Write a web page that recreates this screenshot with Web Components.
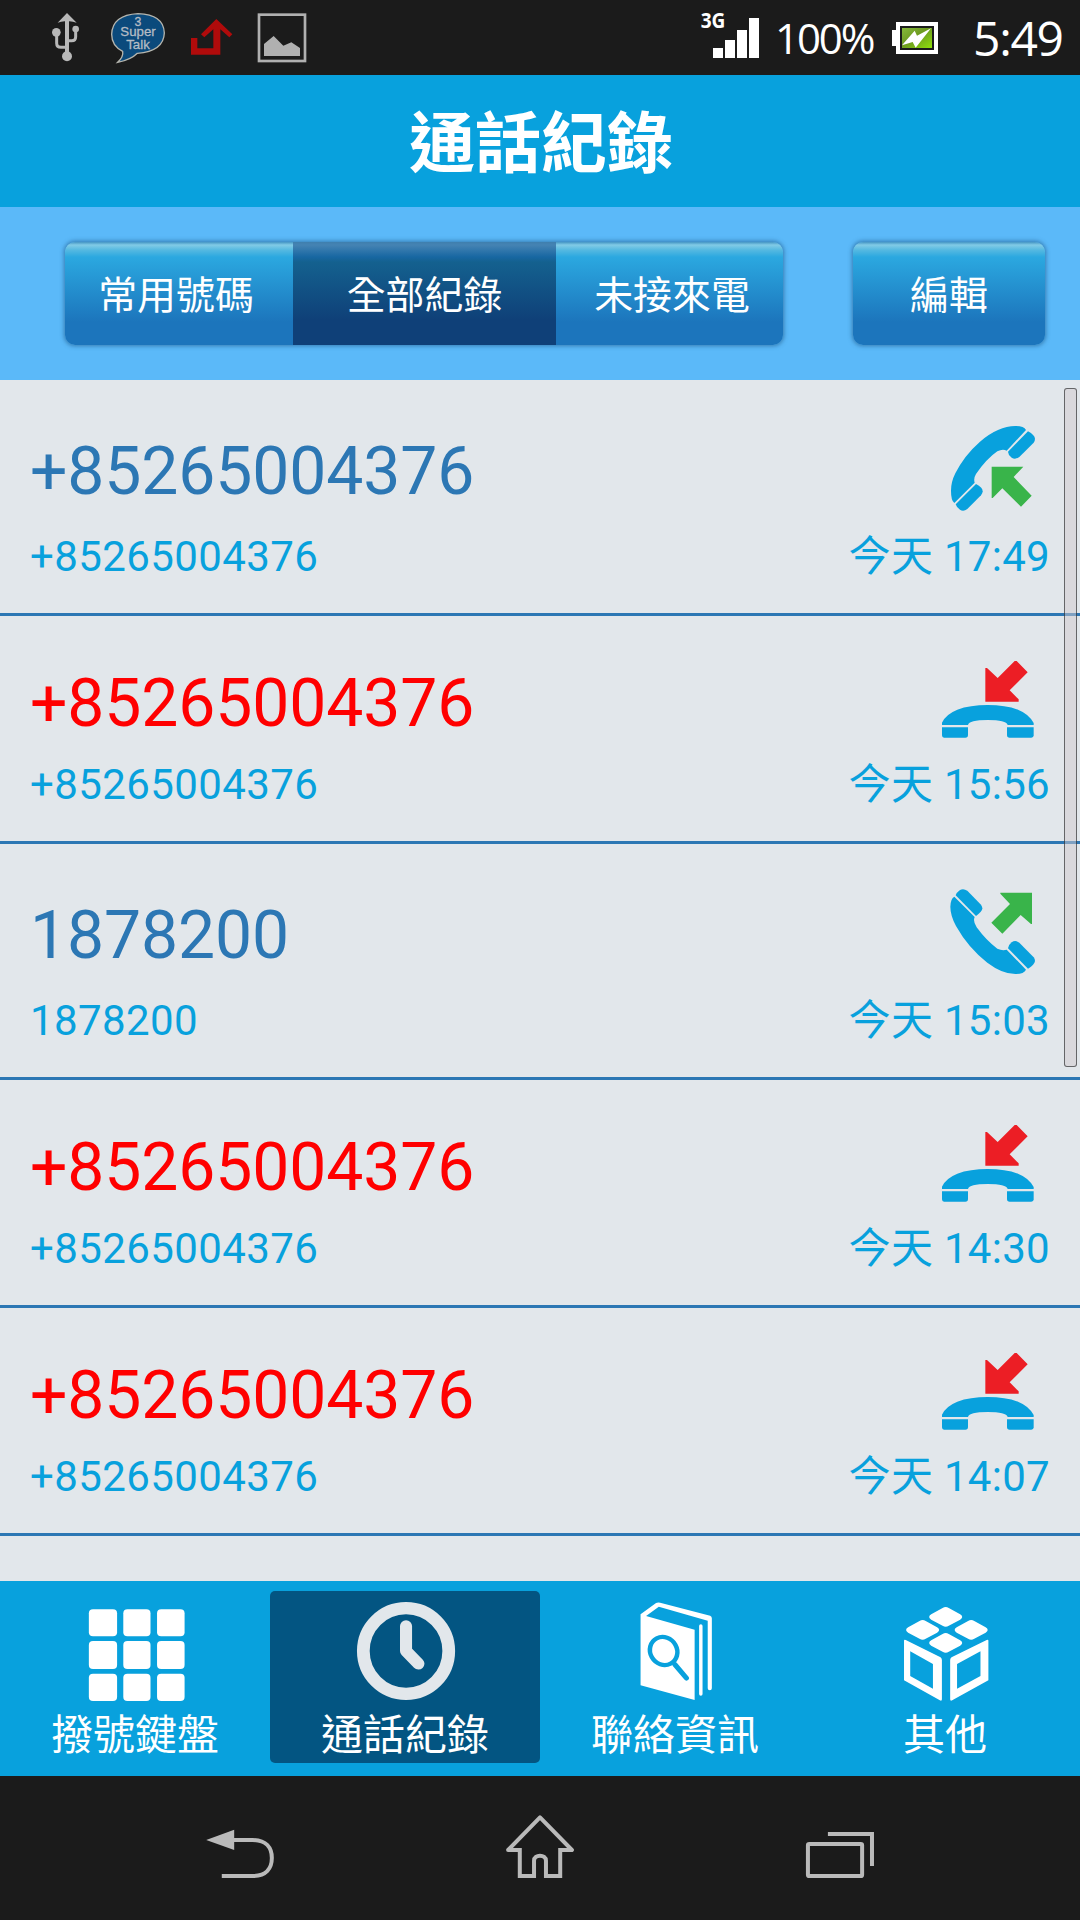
<!DOCTYPE html>
<html lang="zh-Hant">
<head>
<meta charset="utf-8">
<title>通話紀錄</title>
<style>
  body {
    margin: 0;
    width: 1080px;
    height: 1920px;
    overflow: hidden;
    background: #1b1b1b;
    font-family: Roboto, "Noto Sans CJK TC", sans-serif;
  }
</style>
</head>
<body>
<call-app></call-app>

<script>
const CALLS = [
  { kind: "incoming", number: "+85265004376", time: "今天 17:49" },
  { kind: "missed", number: "+85265004376", time: "今天 15:56" },
  { kind: "outgoing", number: "1878200", time: "今天 15:03" },
  { kind: "missed", number: "+85265004376", time: "今天 14:30" },
  { kind: "missed", number: "+85265004376", time: "今天 14:07" }
];

const HANDSET = {
  incoming: /* html */`
    <svg viewBox="480 150 300 300">
      <g fill="#08a1dd">
        <path d="M738 180 Q732 168 706 168 Q655 168 600 215 Q553 256 526 310 Q513 336 513 362 Q513 392 523 399 L584 338 Q580 325 588 312 Q620 266 652 244 Q668 236 680 242Z"/>
        <path d="M744 184 Q764 195 765 206 Q765 212 761 218 L718 261 Q706 270 695 263 Q684 254 684 245Z"/>
        <path d="M588 342 Q608 352 608 364 Q608 371 603 376 L562 417 Q550 426 540 419 Q529 411 527 403Z"/>
      </g>
      <path fill="#39b44a" d="M635 290H730L701 321L755 377L723 410L667 355L638 384H635Z"/>
    </svg>`,
  outgoing: /* html */`
    <svg viewBox="480 72 300 300">
      <g fill="#08a1dd">
        <path d="M738 329 Q732 342 706 342 Q667 342 622 308 Q565 264 528 198 Q511 166 511 140 Q512 115 523 110 L584 171 Q578 184 590 202 Q620 243 652 266 Q667 273 680 269Z"/>
        <path d="M744 326 Q764 314 765 303 Q765 297 761 292 L718 248 Q706 239 695 247 Q684 256 684 265Z"/>
        <path d="M588 168 Q607 155 607 145 Q607 140 603 134 L562 92 Q550 84 540 90 Q529 98 527 106Z"/>
      </g>
      <path fill="#39b44a" d="M661 98H756V192H753L722 165L667 221L634 188L690 132L661 101Z"/>
    </svg>`,
  missed: /* html */`
    <svg viewBox="480 78 300 300">
      <g fill="#08a1dd">
        <path d="M486 285V278Q497 253 532 239Q570 225 623 225Q676 225 714 239Q747 252 761 279V285H683Q679 270 623 270Q567 270 564 285Z"/>
        <path d="M486 292H564V315Q564 323 556 323H492Q486 323 486 316Z"/>
        <path d="M681 292H761V316Q761 323 754 323H689Q681 323 681 315Z"/>
      </g>
      <path fill="#ec1e25" d="M616 215V114H621L653 144L704 93H710L743 127L689 181L716 208V215Z"/>
    </svg>`
};

// Every tab icon is drawn on the same 784x330 grid
const TAB_ICONS = {
  keypad: /* html */`
    <g fill="#fff">
      ${[[118, 81], [213, 84], [311, 82]].map(([y, h]) =>
        [[258, 82], [358, 79], [456, 80]].map(([x, w]) =>
          `<rect x="${x}" y="${y}" width="${w}" height="${h}" rx="12"/>`).join("")).join("")}
    </g>`,
  clock: /* html */`
    <g fill="none" stroke="#e2e7eb">
      <ellipse cx="395" cy="243" rx="124" ry="128.500" stroke-width="37"/>
      <path d="M395 168V243L431 281" stroke-width="35" stroke-linecap="round" stroke-linejoin="round"/>
    </g>`,
  book: /* html */`
    <path fill="#fff" fill-rule="evenodd" d="M292 133L337 99Q342 96 349 98L494 137Q499 139 499 145V355Q499 361 493 361Q487 361 487 355V152L345 110L308 138L449 179V390L292 346Z"/>
    <path stroke="#fff" stroke-width="10" stroke-linecap="round" d="M467 168V372"/>
    <ellipse cx="359" cy="243" rx="39" ry="43" transform="rotate(-28 359 243)" fill="none" stroke="#08a1dd" stroke-width="13"/>
    <path d="M392 284L425 324" stroke="#08a1dd" stroke-width="15" stroke-linecap="round"/>`,
  cube: /* html */`
    <g fill="#fff">
      <path id="t" d="M385 114Q394 108 403 114L436 133Q448 141 436 149L403 167Q394 173 385 167L352 149Q340 141 352 133Z"/>
      <use href="#t" x="-67" y="39"/>
      <use href="#t" x="74" y="39"/>
      <use href="#t" y="78"/>
      <path fill-rule="evenodd" d="M273 212Q273 208 278 210L379 262Q383 265 383 270V388Q383 394 377 391L273 331ZM291 244V318L357 356V282Z"/>
      <path fill-rule="evenodd" d="M518 212Q518 208 513 210L411 262Q407 265 407 270V388Q407 394 413 391L518 331ZM495 244L427 282V356L495 318Z"/>
    </g>`
};

class StatusBar extends HTMLElement {
  constructor() {
    super();
    this.attachShadow({ mode: "open" });
  }

  static get styles() {
    return /* css */`
      :host {
        display: flex;
        justify-content: space-between;
        height: 75px;
        background: #1b1b1b;
        color: #fff;
        font-family: "Open Sans", "Noto Sans", sans-serif;
      }

      div {
        display: flex;
        align-items: flex-start;
      }

      svg {
        display: block;
        height: 75px;
      }

      span {
        white-space: nowrap;
        line-height: 75px;
        height: 75px;
      }

      .percent {
        width: 112px;
        margin-left: 10px;
        font-size: 42px;
        font-weight: 370;
        letter-spacing: -2.100px;
        line-height: 76px;
      }

      .clock {
        width: 107px;
        font-size: 48px;
        letter-spacing: -1.300px;
        font-weight: 380;
        line-height: 76px;
        margin-left: 30px;
      }
    `;
  }

  connectedCallback() {
    this.shadowRoot.innerHTML = /* html */`
    <style>${StatusBar.styles}</style>
    <div>
      <svg width="320" viewBox="0 0 960 225">
        <g fill="none" stroke="#b8b8b8" stroke-width="9">
          <path d="M201 60V170" stroke-width="12"/>
          <path d="M170 98V130Q170 142 183 142H201M227 88V110Q227 122 215 122H201"/>
        </g>
        <g fill="#b8b8b8">
          <path d="M201 39L230 68Q215 62 201 64Q187 62 173 68Z"/>
          <circle cx="169" cy="97" r="13"/>
          <circle cx="227" cy="87" r="10"/>
          <circle cx="201" cy="169" r="15"/>
        </g>
        <path d="M353 187Q371 170 368 154Q335 138 335 103Q337 45 414 41Q491 43 493 99Q491 154 412 160Q392 180 353 187Z" fill="#0b4a7c" stroke="#b5b5ae" stroke-width="4"/>
        <g fill="#b5bcc4" stroke="#b5bcc4" stroke-width=".8" font-family="Liberation Sans, sans-serif" text-anchor="middle">
          <text x="414" y="79" font-size="37">3</text>
          <text x="414" y="108" font-size="37" textLength="106" lengthAdjust="spacingAndGlyphs">Super</text>
          <text x="414" y="148" font-size="38" textLength="71" lengthAdjust="spacingAndGlyphs">Talk</text>
        </g>
        <path d="M649 57L697 103L688 112L661 88V164H573V114H592V145H640V88L613 112L603 103Z" fill="#b00b0b"/>
        <rect x="777" y="44" width="138" height="139" fill="none" stroke="#b0b0b0" stroke-width="8"/>
        <path d="M792 168V132L821 108L850 137L874 127L900 144V168Z" fill="#b0b0b0"/>
      </svg>
    </div>
    <div>
      <svg width="65" viewBox="60 0 195 225">
        <text x="62" y="84" font-size="64" font-weight="700" fill="#fff" textLength="74" lengthAdjust="spacingAndGlyphs">3G</text>
        <path fill="#fff" d="M99 144h30v30h-30zM135 120h30v54h-30zM171 90h30v84h-30zM207 54h30v120h-30z"/>
      </svg>
      <span class="percent">100%</span>
      <svg width="56" viewBox="621 0 168 225">
        <defs>
          <linearGradient id="charge" x2="1" y2="1">
            <stop offset="0" stop-color="#86b83c"/>
            <stop offset=".45" stop-color="#6d9a20"/>
            <stop offset="1" stop-color="#8fe00b"/>
          </linearGradient>
        </defs>
        <path fill="#fff" fill-rule="evenodd" d="M648 66H774V162H648V138H636V90H648ZM660 78V150H762V78Z"/>
        <rect x="666" y="84" width="90" height="60" fill="url(#charge)"/>
        <path d="M666 136L704 92L711 107L753 85L707 143L698 126Z" fill="#fff"/>
      </svg>
      <span class="clock">5:49</span>
    </div>
    `;
  }
}

class TitleBar extends HTMLElement {
  constructor() {
    super();
    this.attachShadow({ mode: "open" });
  }

  connectedCallback() {
    this.shadowRoot.innerHTML = /* html */`
    <style>
      :host {
        display: flex;
        justify-content: center;
        box-sizing: border-box;
        height: 132px;
        padding: 4px 0 0 2px;
        background: #08a1dd;
        color: #fff;
        font-size: 66px;
        font-weight: 700;
        line-height: 132px;
      }
    </style>
    <slot></slot>
    `;
  }
}

class GlossButton extends HTMLElement {
  constructor() {
    super();
    this.attachShadow({ mode: "open" });
  }

  connectedCallback() {
    this.shadowRoot.innerHTML = /* html */`
    <style>
      :host {
        display: flex;
        justify-content: center;
        box-sizing: border-box;
        height: 103px;
        color: #fff;
        font-size: 38.900px;
        line-height: 108px;
        background: linear-gradient(#4596c5 0, #82cbe6 3px, #55b9e1 8px, #2ba8e0 15px, #1c75bc 80px, #1c75bc);
      }

      :host([active]) {
        background: linear-gradient(#3f7fae 0, #4583b3 3px, #1767a2 15px, #14618f 20px, #0f4078 78px, #0f4078);
      }
    </style>
    <slot></slot>
    `;
  }
}

class FilterBar extends HTMLElement {
  constructor() {
    super();
    this.attachShadow({ mode: "open" });
  }

  static get styles() {
    return /* css */`
      :host {
        display: flex;
        justify-content: space-between;
        align-items: flex-start;
        box-sizing: border-box;
        height: 173px;
        padding: 35px 35px 0 65px;
        background: #5bb9f9;
      }

      .group,
      .edit {
        border-radius: 10px;
        overflow: hidden;
        box-shadow: 0 0 4px 1px #2a6c9dcc;
      }

      .group {
        display: grid;
        grid-template-columns: 228px 263px 227px;
      }

      .edit {
        width: 192px;
      }

      .first { padding-right: 6px; }
      .last { padding-left: 5px; }
    `;
  }

  connectedCallback() {
    this.shadowRoot.innerHTML = /* html */`
    <style>${FilterBar.styles}</style>
    <div class="group">
      <gloss-button class="first">常用號碼</gloss-button>
      <gloss-button active>全部紀錄</gloss-button>
      <gloss-button class="last">未接來電</gloss-button>
    </div>
    <gloss-button class="edit">編輯</gloss-button>
    `;
  }
}

class CallRow extends HTMLElement {
  constructor() {
    super();
    this.attachShadow({ mode: "open" });
  }

  static get styles() {
    return /* css */`
      :host {
        display: grid;
        grid-template-columns: 1fr auto;
        grid-template-rows: 112px 50px;
        align-items: start;
        box-sizing: border-box;
        height: 236px;
        padding: 40px 30px 0 30px;
        border-bottom: 3px solid #2c77b4;
        color: #08a1dd;
        font-size: 42px;
        line-height: 50px;
      }

      :host([kind="missed"]) {
        grid-template-rows: 104px 50px;
        height: 228px;
      }

      .name {
        margin-top: 13px;
        color: #2c77b4;
        font-size: 66px;
        line-height: 78px;
        letter-spacing: -.1px;
      }

      :host([kind="missed"]) .name {
        margin-top: 9px;
        color: #f00;
      }

      .number {
        letter-spacing: .4px;
      }

      .time {
        letter-spacing: .3px;
      }

      svg {
        display: block;
        width: 100px;
        height: 100px;
        justify-self: end;
        margin-right: 10px;
      }
    `;
  }

  connectedCallback() {
    const number = this.getAttribute("number");
    this.shadowRoot.innerHTML = /* html */`
    <style>${CallRow.styles}</style>
    <div class="name">${number}</div>
    ${HANDSET[this.getAttribute("kind")]}
    <div class="number">${number}</div>
    <div class="time"><slot></slot></div>
    `;
  }
}

class CallList extends HTMLElement {
  constructor() {
    super();
    this.attachShadow({ mode: "open" });
  }

  connectedCallback() {
    const rows = CALLS.map(c => `<call-row kind="${c.kind}" number="${c.number}">${c.time}</call-row>`);
    this.shadowRoot.innerHTML = /* html */`
    <style>
      :host {
        display: block;
        position: relative;
        height: 1201px;
        background: #e2e7eb;
      }

      .thumb {
        position: absolute;
        top: 8px;
        right: 3px;
        box-sizing: border-box;
        width: 13px;
        height: 679px;
        border: 1.5px solid #0008;
        border-radius: 3px;
        background: #cfcace80;
      }
    </style>
    ${rows.join("")}
    <div class="thumb"></div>
    `;
  }
}

class TabItem extends HTMLElement {
  constructor() {
    super();
    this.attachShadow({ mode: "open" });
  }

  connectedCallback() {
    this.shadowRoot.innerHTML = /* html */`
    <style>
      :host {
        display: flex;
        flex-direction: column;
        align-items: center;
        width: 270px;
        height: 172px;
        border-radius: 5px;
        color: #fff;
        font-size: 42px;
        line-height: 50px;
      }

      :host([active]) {
        background: #035582;
      }

      svg {
        display: block;
        width: 270px;
        height: 110px;
        margin: -1px 0 11px;
      }
    </style>
    <svg viewBox="0 60 784 330" preserveAspectRatio="none" overflow="visible">${TAB_ICONS[this.getAttribute("icon")]}</svg>
    <slot></slot>
    `;
  }
}

class TabBar extends HTMLElement {
  constructor() {
    super();
    this.attachShadow({ mode: "open" });
  }

  connectedCallback() {
    this.shadowRoot.innerHTML = /* html */`
    <style>
      :host {
        display: flex;
        box-sizing: border-box;
        height: 195px;
        padding-top: 10px;
        background: #08a1dd;
      }
    </style>
    <tab-item icon="keypad">撥號鍵盤</tab-item>
    <tab-item icon="clock" active>通話紀錄</tab-item>
    <tab-item icon="book">聯絡資訊</tab-item>
    <tab-item icon="cube">其他</tab-item>
    `;
  }
}

class NavBar extends HTMLElement {
  constructor() {
    super();
    this.attachShadow({ mode: "open" });
  }

  connectedCallback() {
    this.shadowRoot.innerHTML = /* html */`
    <style>
      :host {
        display: flex;
        justify-content: center;
        box-sizing: border-box;
        height: 144px;
        padding-top: 4px;
        background: #1b1b1b;
      }

      svg {
        display: block;
        width: 240px;
        height: 140px;
        fill: none;
        stroke: #bababa;
        stroke-width: 4px;
      }

      path, rect {
        vector-effect: non-scaling-stroke;
      }
    </style>
    <svg viewBox="0 0 522.667 420" preserveAspectRatio="none">
      <path d="M57 180L118 149V210Z" fill="#bababa" stroke="none"/>
      <path d="M116 180H158C188 180 200 204 200 234C200 264 188 288 158 288H91"/>
    </svg>
    <svg viewBox="522.667 0 522.667 420" preserveAspectRatio="none">
      <path stroke-linejoin="round" d="M740 210H714.500L784 112L853.500 210H828"/>
      <path d="M738 210H740V288H771V242C771 222 797 222 797 242V288H828V210H830"/>
    </svg>
    <svg viewBox="1045.333 0 522.667 420" preserveAspectRatio="none">
      <rect x="1367.500" y="192" width="118" height="96" rx="3" ry="4"/>
      <path d="M1411 162H1507V258"/>
    </svg>
    `;
  }
}

class CallApp extends HTMLElement {
  constructor() {
    super();
    this.attachShadow({ mode: "open" });
  }

  connectedCallback() {
    this.shadowRoot.innerHTML = /* html */`
    <style>
      :host {
        display: flex;
        flex-direction: column;
        width: 1080px;
        height: 1920px;
      }
    </style>
    <status-bar></status-bar>
    <title-bar>通話紀錄</title-bar>
    <filter-bar></filter-bar>
    <call-list></call-list>
    <tab-bar></tab-bar>
    <nav-bar></nav-bar>
    `;
  }
}

customElements.define("status-bar", StatusBar);
customElements.define("title-bar", TitleBar);
customElements.define("gloss-button", GlossButton);
customElements.define("filter-bar", FilterBar);
customElements.define("call-row", CallRow);
customElements.define("call-list", CallList);
customElements.define("tab-item", TabItem);
customElements.define("tab-bar", TabBar);
customElements.define("nav-bar", NavBar);
customElements.define("call-app", CallApp);
</script>
</body>
</html>
